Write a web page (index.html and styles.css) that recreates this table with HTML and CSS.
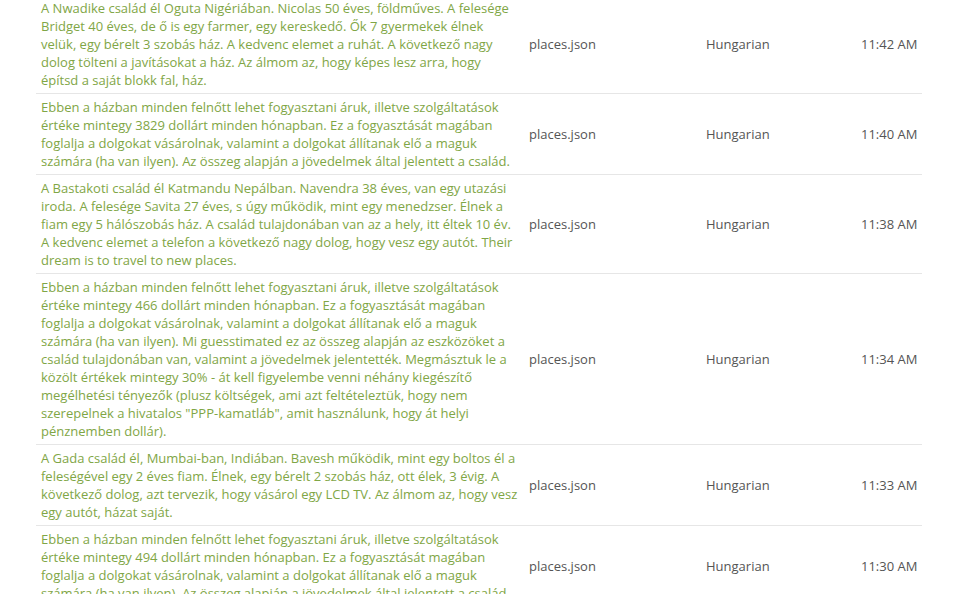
FILE: index.html
```html
<!DOCTYPE html>
<html lang="hu">
<head>
<meta charset="utf-8">
<title>Translations</title>
<link rel="stylesheet" href="styles.css">
</head>
<body>
<div class="wrap">
<table class="list">
  <colgroup>
    <col class="c-text"><col class="c-file"><col class="c-lang"><col class="c-time">
  </colgroup>
  <tbody>
    <tr class="first">
      <td class="txt">A Nwadike család él Oguta Nigériában. Nicolas 50 éves, földműves. A felesége Bridget 40 éves, de ő is egy farmer, egy kereskedő. Ők 7 gyermekek élnek velük, egy bérelt 3 szobás ház. A kedvenc elemet a ruhát. A következő nagy dolog tölteni a javításokat a ház. Az álmom az, hogy képes lesz arra, hogy építsd a saját blokk fal, ház.</td>
      <td>places.json</td><td>Hungarian</td><td class="time">11:42 AM</td>
    </tr>
    <tr>
      <td class="txt">Ebben a házban minden felnőtt lehet fogyasztani áruk, illetve szolgáltatások értéke mintegy 3829 dollárt minden hónapban. Ez a fogyasztását magában foglalja a dolgokat vásárolnak, valamint a dolgokat állítanak elő a maguk számára (ha van ilyen). Az összeg alapján a jövedelmek által jelentett a család.</td>
      <td>places.json</td><td>Hungarian</td><td class="time">11:40 AM</td>
    </tr>
    <tr>
      <td class="txt">A Bastakoti család él Katmandu Nepálban. Navendra 38 éves, van egy utazási iroda. A felesége Savita 27 éves, s úgy működik, mint egy menedzser. Élnek a fiam egy 5 hálószobás ház. A család tulajdonában van az a hely, itt éltek 10 év. A kedvenc elemet a telefon a következő nagy dolog, hogy vesz egy autót. Their dream is to travel to new places.</td>
      <td>places.json</td><td>Hungarian</td><td class="time">11:38 AM</td>
    </tr>
    <tr>
      <td class="txt">Ebben a házban minden felnőtt lehet fogyasztani áruk, illetve szolgáltatások értéke mintegy 466 dollárt minden hónapban. Ez a fogyasztását magában foglalja a dolgokat vásárolnak, valamint a dolgokat állítanak elő a maguk számára (ha van ilyen). Mi guesstimated ez az összeg alapján az eszközöket a család tulajdonában van, valamint a jövedelmek jelentették. Megmásztuk le a közölt értékek mintegy 30% - át kell figyelembe venni néhány kiegészítő megélhetési tényezők (plusz költségek, ami azt feltételeztük, hogy nem szerepelnek a hivatalos "PPP-kamatláb", amit használunk, hogy át helyi pénznemben dollár).</td>
      <td>places.json</td><td>Hungarian</td><td class="time">11:34 AM</td>
    </tr>
    <tr>
      <td class="txt">A Gada család él, Mumbai-ban, Indiában. Bavesh működik, mint egy boltos él a feleségével egy 2 éves fiam. Élnek, egy bérelt 2 szobás ház, ott élek, 3 évig. A következő dolog, azt tervezik, hogy vásárol egy LCD TV. Az álmom az, hogy vesz egy autót, házat saját.</td>
      <td>places.json</td><td>Hungarian</td><td class="time">11:33 AM</td>
    </tr>
    <tr>
      <td class="txt">Ebben a házban minden felnőtt lehet fogyasztani áruk, illetve szolgáltatások értéke mintegy 494 dollárt minden hónapban. Ez a fogyasztását magában foglalja a dolgokat vásárolnak, valamint a dolgokat állítanak elő a maguk számára (ha van ilyen). Az összeg alapján a jövedelmek által jelentett a család.</td>
      <td>places.json</td><td>Hungarian</td><td class="time">11:30 AM</td>
    </tr>
  </tbody>
</table>
</div>
</body>
</html>
```

FILE: styles.css
```css
html, body {
  margin: 0;
  padding: 0;
  background: #fff;
}
body {
  font-family: "Open Sans", "Liberation Sans", sans-serif;
  font-size: 13px;
  line-height: 18px;
  color: #555;
  overflow: hidden;
}
.wrap {
  padding: 0 33px 0 36px;
  margin-top: -5px;
}
.list {
  width: 886px;
  border-collapse: collapse;
  table-layout: fixed;
}
.c-text { width: 488px; }
.c-file { width: 177px; }
.c-lang { width: 155px; }
.c-time { width: 66px; }
.list td {
  padding: 4px 5px;
  vertical-align: middle;
  border-top: 1px solid #e6e6e6;
}
.list tr.first td {
  border-top: 0;
}
.list td.txt {
  color: #7fa646;
}
.list td.time {
  white-space: nowrap;
}
```
